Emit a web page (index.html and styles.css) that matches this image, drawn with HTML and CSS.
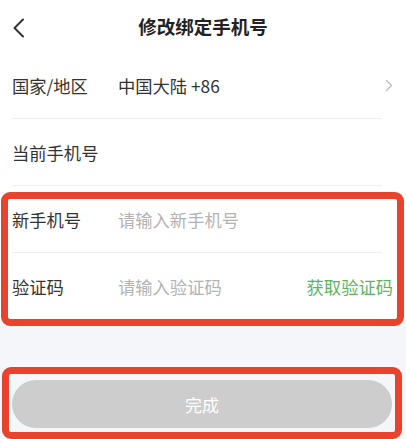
FILE: index.html
```html
<!DOCTYPE html>
<html lang="zh-CN">
<head>
<meta charset="utf-8">
<title>修改绑定手机号</title>
<link rel="stylesheet" href="styles.css">
</head>
<body>
<div class="page">
  <header class="header">
    <span class="back">
      <svg width="13" height="20" viewBox="0 0 13 20"><path d="M11 1.5 L2.5 10 L11 18.5" fill="none" stroke="#333" stroke-width="2" stroke-linecap="round" stroke-linejoin="round"/></svg>
    </span>
    <h1 class="title">修改绑定手机号</h1>
    <span class="spacer"></span>
  </header>
  <section class="list">
    <div class="row">
      <span class="label">国家/地区</span>
      <span class="value">中国大陆 +86</span>
      <svg class="arrow" width="8" height="13" viewBox="0 0 8 13"><path d="M1.5 1.5 L6.5 6.5 L1.5 11.5" fill="none" stroke="#bbb" stroke-width="1.4" stroke-linecap="round" stroke-linejoin="round"/></svg>
    </div>
    <div class="row">
      <span class="label">当前手机号</span>
      <span class="value"></span>
    </div>
    <div class="row">
      <span class="label">新手机号</span>
      <span class="placeholder">请输入新手机号</span>
    </div>
    <div class="row last">
      <span class="label">验证码</span>
      <span class="placeholder">请输入验证码</span>
      <span class="code">获取验证码</span>
    </div>
  </section>
  <div class="actions">
    <button class="done">完成</button>
  </div>
  <div class="mark mark-form"></div>
  <div class="mark mark-btn"></div>
</div>
</body>
</html>
```
FILE: styles.css
```css
html, body {
  margin: 0;
  padding: 0;
  background: #f5f6f9;
}
body {
  font-family: "Noto Sans CJK SC", "Noto Sans", sans-serif;
  color: #333;
}
.page {
  position: relative;
  width: 406px;
  height: 439px;
  overflow: hidden;
}
.header {
  height: 52px;
  background: #fff;
  display: grid;
  grid-template-columns: 40px 1fr 40px;
  align-items: center;
}
.back {
  display: flex;
  align-items: center;
  padding-left: 12px;
  padding-top: 3px;
}
.title {
  margin: 0;
  text-align: center;
  font-size: 18.5px;
  font-weight: 700;
  color: #222;
  line-height: 1;
}
.list {
  background: #fff;
}
.row {
  position: relative;
  display: flex;
  align-items: center;
  height: 67px;
  padding: 0 13px 0 12px;
  font-size: 17.3px;
}
.row::after {
  content: "";
  position: absolute;
  left: 12px;
  right: 24px;
  bottom: 0;
  height: 1px;
  background: #efefef;
}
.row.last::after {
  display: none;
}
.label {
  width: 106px;
  flex: none;
  color: #333;
}
.value {
  flex: 1;
  color: #333;
}
.placeholder {
  flex: 1;
  color: #b3b3b3;
}
.arrow {
  flex: none;
}
.code {
  color: #5bb55f;
}
.actions {
  padding: 60px 14px 0 12px;
}
.done {
  display: block;
  width: 100%;
  height: 48px;
  border: none;
  border-radius: 24px;
  background: #cdcdcd;
  color: #fff;
  font-family: inherit;
  font-size: 17px;
}
.mark {
  position: absolute;
  box-sizing: border-box;
  border: 7px solid #e8432d;
  border-radius: 9px;
}
.mark-form {
  left: 1px;
  top: 192px;
  width: 403px;
  height: 134px;
}
.mark-btn {
  left: 2px;
  top: 367px;
  width: 400px;
  height: 72px;
}
```
